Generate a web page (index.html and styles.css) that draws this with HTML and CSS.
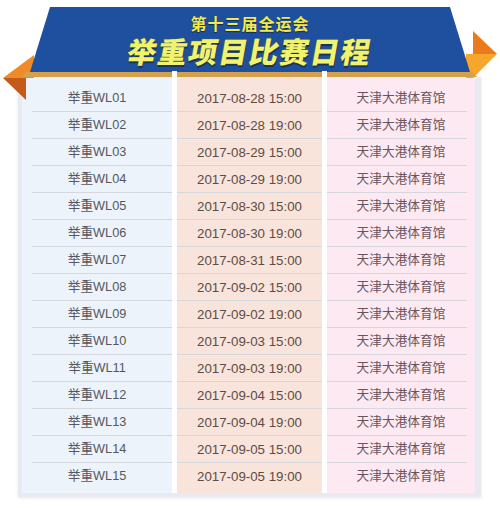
FILE: index.html
```html
<!DOCTYPE html>
<html lang="zh">
<head>
<meta charset="utf-8">
<title>举重项目比赛日程</title>
<link rel="stylesheet" href="styles.css">
</head>
<body>
<div class="page">
  <header class="banner">
    <svg class="banner-bg" width="500" height="104" viewBox="0 0 500 104">
      <polygon points="3,78 34,55 34,78" fill="#f08a26"/>
      <polygon points="3,78 26,78 26,100" fill="#c35b1c"/>
      <polygon points="473,31 497,54 473,55" fill="#e97b1c"/>
      <polygon points="466,54 497,54 473,78 466,78" fill="#f5a62b"/>
      <polygon points="26,72 472,72 477,77 22,77" fill="#d4a04b"/>
      <polygon points="50,7 450,7 470,72 30,72" fill="#1f4f9f"/>
      <rect x="172" y="71" width="5" height="6" fill="#ffffff"/>
      <rect x="322" y="71" width="5" height="6" fill="#ffffff"/>
    </svg>
    <div class="title-small">第十三届全运会</div>
    <div class="title-big">举重项目比赛日程</div>
  </header>
  <div class="card">
    <div class="cols">
      <div class="col col-name">
        <div class="cell">举重WL01</div>
        <div class="cell">举重WL02</div>
        <div class="cell">举重WL03</div>
        <div class="cell">举重WL04</div>
        <div class="cell">举重WL05</div>
        <div class="cell">举重WL06</div>
        <div class="cell">举重WL07</div>
        <div class="cell">举重WL08</div>
        <div class="cell">举重WL09</div>
        <div class="cell">举重WL10</div>
        <div class="cell">举重WL11</div>
        <div class="cell">举重WL12</div>
        <div class="cell">举重WL13</div>
        <div class="cell">举重WL14</div>
        <div class="cell">举重WL15</div>
      </div>
      <div class="col col-time">
        <div class="cell">2017-08-28 15:00</div>
        <div class="cell">2017-08-28 19:00</div>
        <div class="cell">2017-08-29 15:00</div>
        <div class="cell">2017-08-29 19:00</div>
        <div class="cell">2017-08-30 15:00</div>
        <div class="cell">2017-08-30 19:00</div>
        <div class="cell">2017-08-31 15:00</div>
        <div class="cell">2017-09-02 15:00</div>
        <div class="cell">2017-09-02 19:00</div>
        <div class="cell">2017-09-03 15:00</div>
        <div class="cell">2017-09-03 19:00</div>
        <div class="cell">2017-09-04 15:00</div>
        <div class="cell">2017-09-04 19:00</div>
        <div class="cell">2017-09-05 15:00</div>
        <div class="cell">2017-09-05 19:00</div>
      </div>
      <div class="col col-venue">
        <div class="cell">天津大港体育馆</div>
        <div class="cell">天津大港体育馆</div>
        <div class="cell">天津大港体育馆</div>
        <div class="cell">天津大港体育馆</div>
        <div class="cell">天津大港体育馆</div>
        <div class="cell">天津大港体育馆</div>
        <div class="cell">天津大港体育馆</div>
        <div class="cell">天津大港体育馆</div>
        <div class="cell">天津大港体育馆</div>
        <div class="cell">天津大港体育馆</div>
        <div class="cell">天津大港体育馆</div>
        <div class="cell">天津大港体育馆</div>
        <div class="cell">天津大港体育馆</div>
        <div class="cell">天津大港体育馆</div>
        <div class="cell">天津大港体育馆</div>
      </div>
    </div>
  </div>
</div>
</body>
</html>
```

FILE: styles.css
```css
html, body {
  margin: 0;
  padding: 0;
  background: #ffffff;
}

.page {
  width: 500px;
  height: 508px;
  overflow: hidden;
  font-family: "Liberation Sans", "Noto Sans CJK SC", sans-serif;
}

.banner {
  position: relative;
  z-index: 2;
  height: 77px;
  box-sizing: border-box;
  padding-top: 13px;
  text-align: center;
}

.banner-bg {
  position: absolute;
  left: 0;
  top: 0;
  z-index: -1;
  overflow: visible;
}

.title-small {
  font-family: "Noto Sans CJK SC", sans-serif;
  font-weight: 700;
  font-size: 16px;
  line-height: 20px;
  letter-spacing: 1px;
  color: #f3e84c;
  text-shadow: 0 1px 1px #0c2a5c;
}

.title-big {
  margin-top: 1px;
  font-family: "Noto Sans CJK SC", sans-serif;
  font-weight: 900;
  font-size: 29px;
  line-height: 32px;
  letter-spacing: 1.5px;
  color: #f1f26e;
  transform: skewX(-10deg);
  text-shadow: 1px 2px 0 #17355a, 0 0 2px #5a6a20;
}

.card {
  position: relative;
  z-index: 1;
  margin-left: 18px;
  width: 463px;
  box-sizing: border-box;
  padding: 0 6px 4px 4px;
  background: #e8eaf0;
  box-shadow: 0 1px 3px rgba(170, 175, 190, 0.3);
}

.cols {
  display: flex;
  gap: 5px;
  background: #ffffff;
}

.col {
  box-sizing: border-box;
  padding: 8px 0 3px;
  font-size: 12.7px;
}

.col-name {
  width: 150px;
  background: #ecf3fb;
  color: #56565c;
}

.col-time {
  width: 145px;
  background: #f8e4da;
  color: #5e4b46;
  font-size: 13.3px;
}

.col-venue {
  width: 148px;
  background: #fce9f2;
  color: #6a535c;
}

.cell {
  height: 27px;
  line-height: 27px;
  box-sizing: border-box;
  text-align: center;
  border-bottom: 1px solid #d6d6dd;
}

.cell:last-child {
  border-bottom: none;
}

.col-name .cell {
  margin-left: 10px;
  padding-right: 10px;
}

.col-venue .cell {
  margin-right: 8px;
  padding-left: 8px;
}
```
